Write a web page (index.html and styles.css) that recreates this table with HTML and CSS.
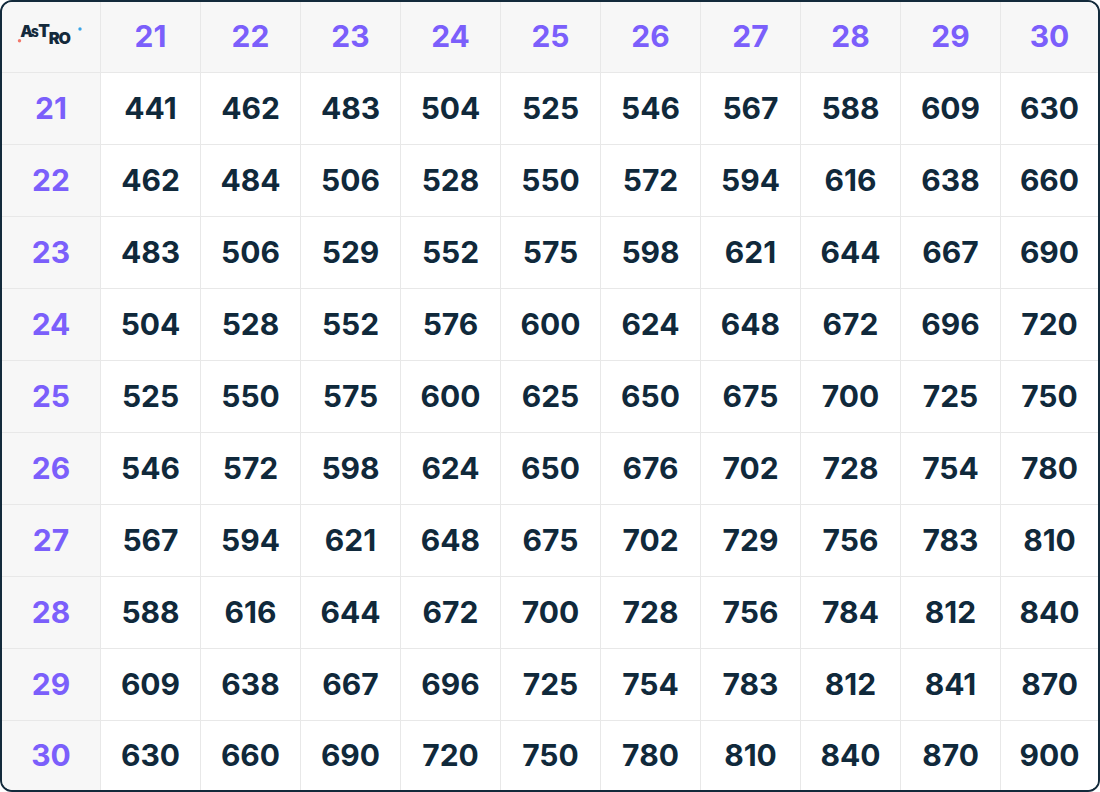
FILE: index.html
```html
<!DOCTYPE html>
<html>
<head>
<meta charset="utf-8">
<link rel="stylesheet" href="styles.css">
</head>
<body>
<div class="table" id="t">
  <div class="cell corner">
    <svg class="logo" width="70" height="30" viewBox="0 0 70 30">
      <circle cx="3.5" cy="18.7" r="1.7" fill="#f2786b"/>
      <text x="4.3" y="14.7" font-size="16">A</text>
      <text x="15" y="14.7" font-size="11.5">S</text>
      <text x="22.3" y="14.7" font-size="17">T</text>
      <text x="32.8" y="21.5" font-size="16.5">R</text>
      <text x="42.6" y="21.8" font-size="16">O</text>
      <circle cx="64" cy="7" r="1.7" fill="#3aa5e8"/>
    </svg>
  </div>
</div>
<script src="app.js"></script>
</body>
</html>
```
FILE: app.js
```js
const t = document.getElementById('t');
let html = '';
for (let c = 21; c <= 30; c++) html += '<div class="cell head">' + c + '</div>';
for (let r = 21; r <= 30; r++) {
  html += '<div class="cell side">' + r + '</div>';
  for (let c = 21; c <= 30; c++) html += '<div class="cell val">' + (r * c) + '</div>';
}
t.insertAdjacentHTML('beforeend', html);
```
FILE: styles.css
```css
html, body { margin: 0; padding: 0; background: #ffffff; }
.table {
  box-sizing: border-box;
  width: 1100px;
  height: 792px;
  border: 2px solid #132a3b;
  border-radius: 12px;
  overflow: hidden;
  display: grid;
  grid-template-columns: 98px repeat(9, 100px) 98px;
  grid-template-rows: 70px repeat(9, 72px) 70px;
  font-family: "Inter", "Open Sans", sans-serif;
  font-weight: 700;
  font-size: 30px;
  line-height: 1;
}
.cell {
  display: flex;
  align-items: center;
  justify-content: center;
  box-sizing: border-box;
  border-left: 1px solid #e8e8e8;
  border-top: 1px solid #e8e8e8;
  padding-bottom: 2px;
}
.corner { border: none; background: #f7f7f7; padding: 0; }
.head { border-top: none; background: #f7f7f7; color: #7b5ffb; }
.side { border-left: none; background: #f7f7f7; color: #7b5ffb; }
.val { color: #10293b; background: #fff; }
.logo { display: block; overflow: visible; }
.logo text {
  font-family: "Inter", sans-serif;
  font-weight: 900;
  fill: #142a3c;
}
```
